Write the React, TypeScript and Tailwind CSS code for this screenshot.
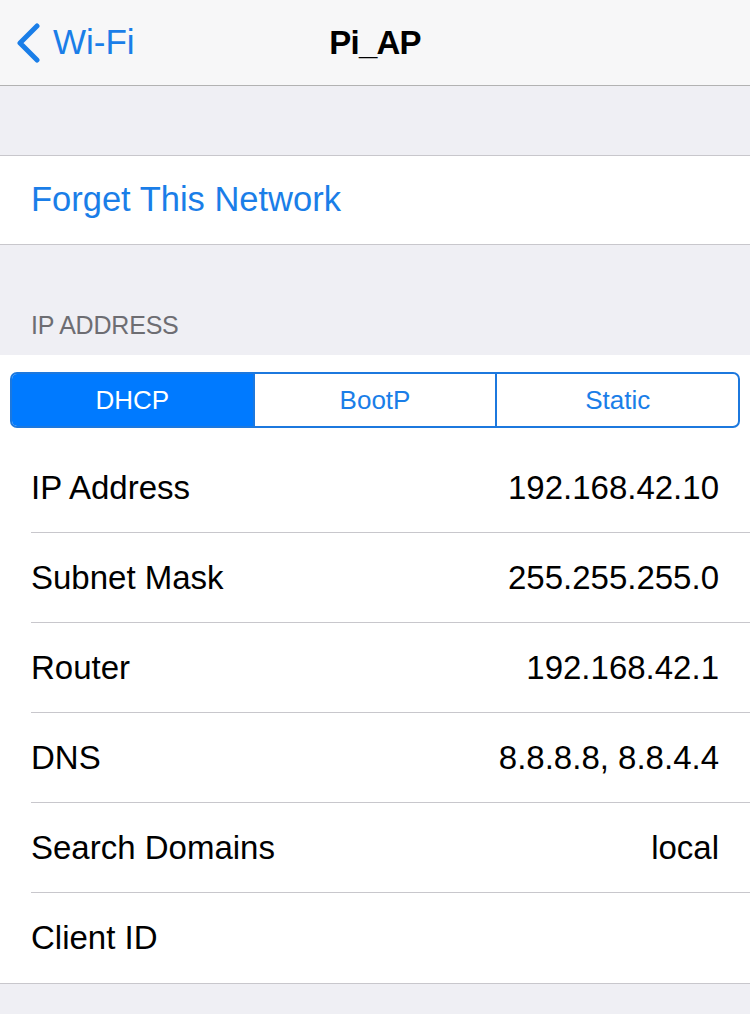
const rows: [string, string][] = [
  ["IP Address", "192.168.42.10"],
  ["Subnet Mask", "255.255.255.0"],
  ["Router", "192.168.42.1"],
  ["DNS", "8.8.8.8, 8.8.4.4"],
  ["Search Domains", "local"],
  ["Client ID", ""],
];

export default function App() {
  return (
    <div
      className="w-[750px] h-[1014px] overflow-hidden bg-[#efeff4]"
      style={{ fontFamily: '"Liberation Sans", Arial, sans-serif' }}
    >
      {/* nav bar */}
      <div className="relative h-[86px] bg-[#f7f7f8] border-b border-[#b2b2b2] flex items-center justify-center">
        <div className="absolute left-[14px] top-0 h-[85px] flex items-center gap-[11px] text-[#1a7ee8]">
          <svg width="28" height="40" viewBox="0 0 28 40">
            <path d="M23 3 L6 20 L23 37" fill="none" stroke="#1a7ee8" strokeWidth="5" strokeLinecap="round" strokeLinejoin="round" />
          </svg>
          <span className="text-[35px]">Wi-Fi</span>
        </div>
        <span className="text-[33px] font-bold text-black tracking-[-0.8px]">Pi_AP</span>
      </div>

      <div className="h-[69px]" />

      <div className="h-[90px] bg-white border-y border-[#c8c7cc] flex items-center pl-[31px]">
        <span className="text-[34.5px] text-[#1a7ee8]">Forget This Network</span>
      </div>

      <div className="h-[110px] flex items-end pl-[31px] pb-[11px]">
        <span className="text-[25px] text-[#6d6d72] tracking-[-0.2px]">IP ADDRESS</span>
      </div>

      <div className="bg-white border-b border-[#c8c7cc]">
        <div className="pt-[17px] pb-[15px] px-[10px]">
          <div className="flex h-[56px] rounded-[7px] border-2 border-[#1c78de] overflow-hidden text-[26px]">
            <div className="flex-1 bg-[#007aff] text-white flex items-center justify-center">DHCP</div>
            <div className="flex-1 border-l-2 border-[#1c78de] text-[#1a7ee8] flex items-center justify-center">BootP</div>
            <div className="flex-1 border-l-2 border-[#1c78de] text-[#1a7ee8] flex items-center justify-center">Static</div>
          </div>
        </div>
        {rows.map(([label, value], i) => (
          <div key={label} className="pl-[31px]">
            <div
              className={
                "h-[90px] flex items-center justify-between pr-[31px] text-[33px] text-black " +
                (i < rows.length - 1 ? "border-b border-[#c8c7cc]" : "")
              }
            >
              <span>{label}</span>
              <span>{value}</span>
            </div>
          </div>
        ))}
      </div>
    </div>
  );
}
